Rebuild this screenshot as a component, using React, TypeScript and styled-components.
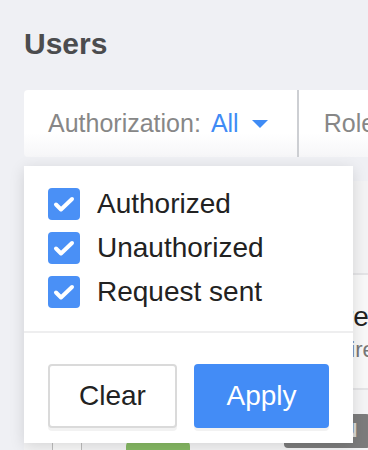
import * as React from 'react'
import styled, { createGlobalStyle } from 'styled-components'

const GlobalStyle = createGlobalStyle`
  body {
    margin: 0;
    background: #eff0f4;
    font-family: "Liberation Sans", Arial, sans-serif;
    overflow: hidden;
  }
`

const Page = styled.div`
  position: relative;
  width: 368px;
  height: 450px;
  padding: 27px 0 0 24px;
  box-sizing: border-box;
  overflow: hidden;
`

const Title = styled.h1`
  margin: 0;
  font-size: 30px;
  line-height: 34px;
  font-weight: 700;
  color: #4b4c4e;
`

const FilterBar = styled.div`
  margin-top: 29px;
  width: 400px;
  height: 67px;
  display: flex;
  align-items: stretch;
  background: linear-gradient(#ffffff 65%, #f6f6f8);
  border-radius: 4px 0 0 4px;
`

const FilterItem = styled.div<{ $last?: boolean }>`
  display: flex;
  align-items: center;
  padding: ${ p => p.$last ? '0 0 0 25px' : '0 29px 0 24px' };
  border-right: ${ p => p.$last ? 'none' : '2px solid #cdcfd3' };
  font-size: 25px;
  color: #878787;
  white-space: nowrap;
`

const FilterValue = styled.span`
  margin-left: 10px;
  color: #3f8bf5;
`

const Caret = styled.svg`
  margin-left: 13px;
  display: block;
`

const Table = styled.div`
  margin-top: 24px;
  width: 400px;
  background: #f7f7f8;
`

const Row = styled.div<{ $height: number, $bg: string, $top?: boolean }>`
  display: flex;
  align-items: ${ p => p.$top ? 'flex-start' : 'center' };
  height: ${ p => p.$height }px;
  padding: ${ p => p.$top ? '50px' : '0' } 0 0 28px;
  box-sizing: border-box;
  background: ${ p => p.$bg };
  border-bottom: 2px solid #e4e4e6;
`

const RowCheck = styled.div`
  width: 30px;
  height: 30px;
  border: 1px solid #bdbdbd;
  border-radius: 3px;
  box-sizing: border-box;
  background: #f9f9f9;
  flex: none;
`

const Avatar = styled.div`
  margin-left: 44px;
  width: 64px;
  height: 64px;
  border-radius: 6px;
  background: #86b964;
  flex: none;
`

const NameCell = styled.div`
  margin-left: 17px;
  white-space: nowrap;
`

const Name = styled.div`
  font-size: 28px;
  line-height: 32px;
  color: #222;
`

const Sub = styled.div`
  margin-top: 4px;
  font-size: 22px;
  line-height: 26px;
  color: #777;
`

const Badge = styled.div`
  margin: -26px 0 0 94px;
  padding: 5px 12px 6px 8px;
  background: #7c7c7c;
  border-radius: 4px;
  font-size: 20px;
  font-weight: 700;
  color: #d8d8d8;
`

const Dropdown = styled.div`
  position: absolute;
  left: 24px;
  top: 166px;
  width: 329px;
  background: #fff;
  box-shadow: 0 3px 14px rgba(0, 0, 0, 0.13);
`

const OptionList = styled.div`
  display: flex;
  flex-direction: column;
  gap: 12px;
  padding: 22px 24px 0;
`

const Option = styled.label`
  display: flex;
  align-items: center;
  gap: 17px;
  height: 32px;
  font-size: 28px;
  color: #222;
`

const Box = styled.span`
  display: flex;
  width: 32px;
  height: 32px;
  border-radius: 4px;
  background: #4a90f6;
  flex: none;
`

const Divider = styled.div`
  margin-top: 23px;
  height: 2px;
  background: #eeeeef;
`

const Actions = styled.div`
  display: flex;
  gap: 17px;
  padding: 31px 24px 15px;
`

const Button = styled.button<{ $primary?: boolean, $width: number }>`
  width: ${ p => p.$width }px;
  height: 64px;
  border-radius: 4px;
  border: ${ p => p.$primary ? 'none' : '2px solid #dadada' };
  background: ${ p => p.$primary ? '#438cf6' : '#fff' };
  color: ${ p => p.$primary ? '#fff' : '#222' };
  font-family: "Liberation Sans", Arial, sans-serif;
  font-size: 28px;
  padding: 0;
  box-shadow: 0 3px 0 rgba(0, 0, 0, 0.05);
`

const options = [ 'Authorized', 'Unauthorized', 'Request sent' ]

const Check = () => (
  <svg width={ 32 } height={ 32 } viewBox={ '0 0 32 32' }>
    <polyline points={ '8,16.5 13,21.5 24,11' } fill={ 'none' } stroke={ '#fff' } strokeWidth={ 4 } strokeLinecap={ 'round' } strokeLinejoin={ 'round' } />
  </svg>
)

export default function App() {
  return (
    <>
      <GlobalStyle />
      <Page>
        <Title>{ 'Users' }</Title>
        <FilterBar>
          <FilterItem>
            { 'Authorization:' }
            <FilterValue>{ 'All' }</FilterValue>
            <Caret width={ 16 } height={ 8 } viewBox={ '0 0 16 8' }>
              <polygon points={ '0,0 16,0 8,8' } fill={ '#3f8bf5' } />
            </Caret>
          </FilterItem>
          <FilterItem $last>{ 'Role: All' }</FilterItem>
        </FilterBar>

        <Table>
          <Row $height={ 94 } $bg={ '#f3f3f4' } />
          <Row $height={ 115 } $bg={ '#f8f8f8' }>
            <RowCheck />
            <Avatar />
            <NameCell>
              <Name>{ 'Martin Lawrence' }</Name>
              <Sub>{ 'martin-jl@empire.io' }</Sub>
            </NameCell>
          </Row>
          <Row $height={ 90 } $bg={ '#f4f4f5' } $top>
            <RowCheck />
            <Avatar />
            <Badge>{ 'ADMIN' }</Badge>
          </Row>
        </Table>

        <Dropdown>
          <OptionList>
            { options.map(o => (
              <Option key={ o }>
                <Box><Check /></Box>
                { o }
              </Option>
            )) }
          </OptionList>
          <Divider />
          <Actions>
            <Button $width={ 129 }>{ 'Clear' }</Button>
            <Button $width={ 135 } $primary>{ 'Apply' }</Button>
          </Actions>
        </Dropdown>
      </Page>
    </>
  )
}
